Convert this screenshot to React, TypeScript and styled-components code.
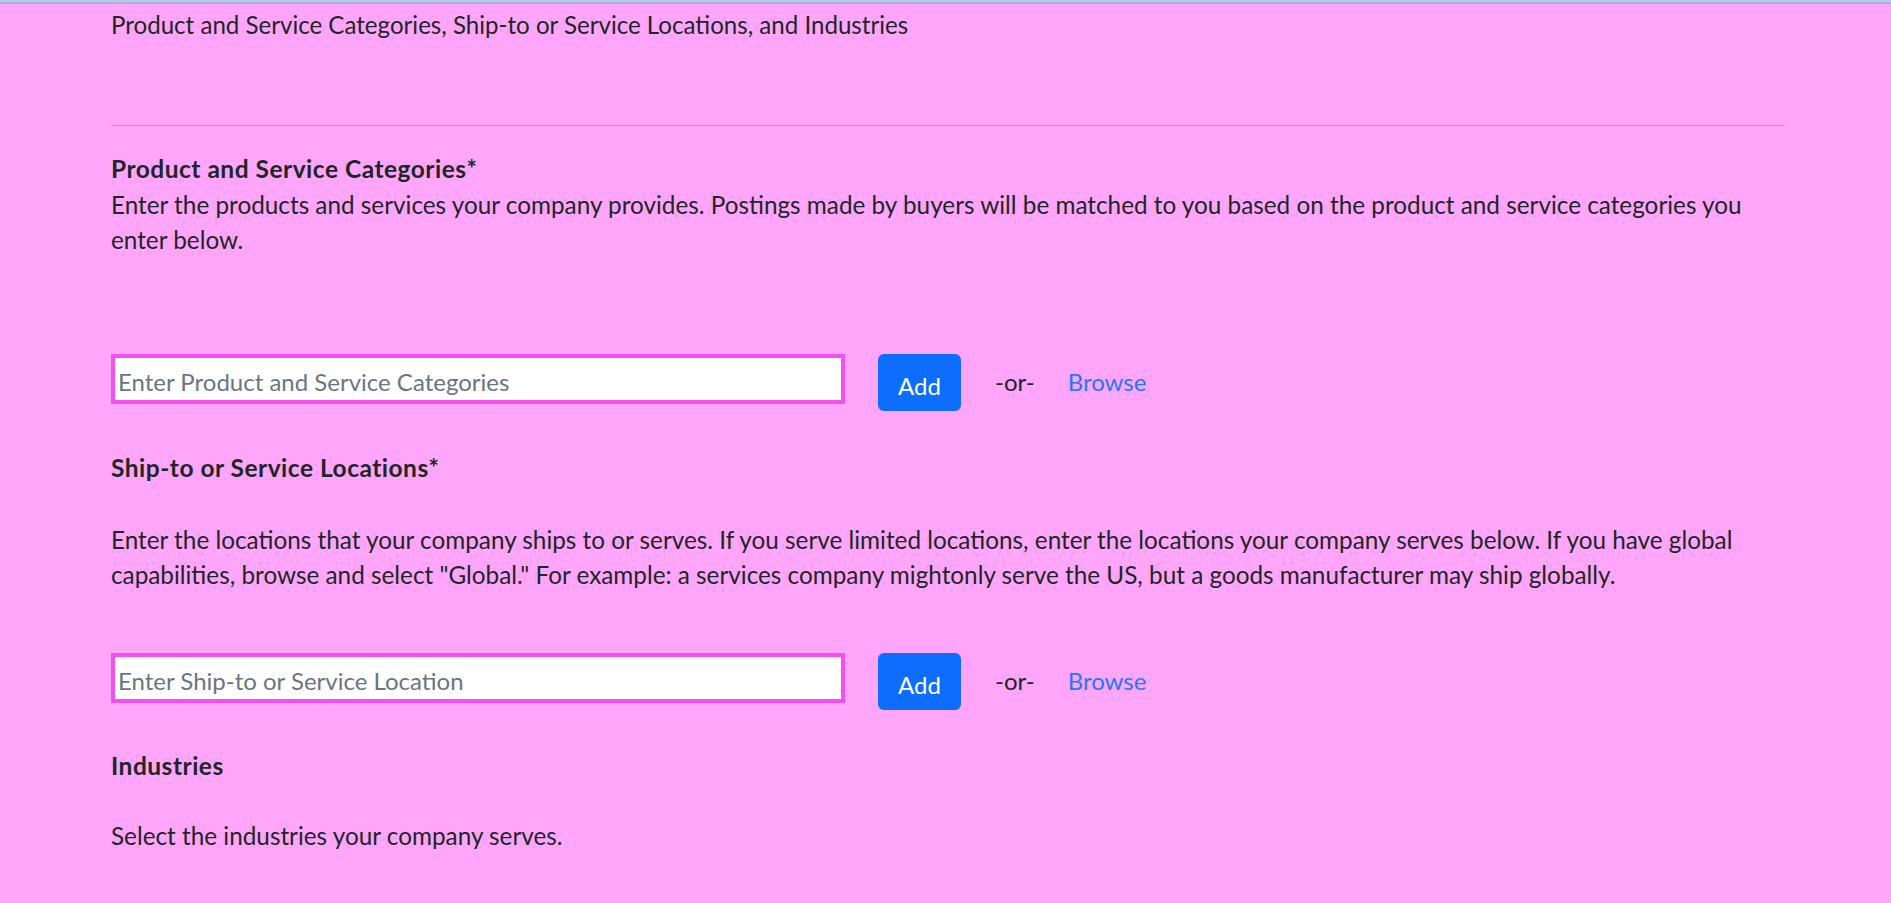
import React from "react";
import styled, { createGlobalStyle } from "styled-components";

const GlobalStyle = createGlobalStyle`
  html, body {
    margin: 0;
    padding: 0;
    background: #ffa6fb;
  }
  body {
    font-family: Lato, "Noto Sans", sans-serif;
    color: #212529;
  }
`;

const Page = styled.div`
  min-height: 903px;
  background: #ffa6fb;
`;

const TopBar = styled.div`
  height: 2px;
  background: #b9caec;
  border-bottom: 2px solid #a4b4d4;
`;

const Container = styled.main`
  width: 1674px;
  padding: 3px 0 0 111px;
  display: flex;
  flex-direction: column;
`;

const Subtitle = styled.p`
  margin: 0;
  font-size: 24.1px;
  line-height: 36px;
`;

const Divider = styled.hr`
  margin: 82px 0 25px;
  border: 0;
  border-top: 1px solid #c78bd0;
  width: 100%;
`;

const Heading = styled.h3<{ $gap?: number }>`
  margin: 0 0 ${(p) => p.$gap ?? 0}px;
  font-size: 24.5px;
  font-weight: 700;
  letter-spacing: 0.5px;
  line-height: 36px;
`;

const Para = styled.p<{ $gap: number }>`
  margin: 0 0 ${(p) => p.$gap}px;
  font-size: 24.3px;
  line-height: 35px;
`;

const Row = styled.div<{ $gap: number }>`
  display: flex;
  align-items: flex-start;
  margin-bottom: ${(p) => p.$gap}px;
`;

const Input = styled.input`
  box-sizing: border-box;
  width: 734px;
  height: 50px;
  border: 4px solid #f64ff0;
  background: #fff;
  padding: 4px 3px 0;
  font-family: inherit;
  font-size: 24px;
  color: #212529;
  outline: none;
  &::placeholder {
    color: #6c757d;
  }
`;

const AddButton = styled.button`
  margin-left: 33px;
  width: 83px;
  height: 57px;
  border: 0;
  border-radius: 6px;
  background: #0d6efd;
  color: #fff;
  font-family: inherit;
  font-size: 24px;
  padding: 6px 0 0;
  cursor: pointer;
`;

const Or = styled.span`
  margin-left: 34px;
  line-height: 56px;
  font-size: 24px;
`;

const BrowseLink = styled.a`
  margin-left: 33px;
  line-height: 56px;
  font-size: 24px;
  color: #1f78fd;
  text-decoration: none;
`;

function AddRow({ placeholder, gap }: { placeholder: string; gap: number }) {
  return (
    <Row $gap={gap}>
      <Input placeholder={placeholder} />
      <AddButton>Add</AddButton>
      <Or>-or-</Or>
      <BrowseLink href="#">Browse</BrowseLink>
    </Row>
  );
}

export default function App() {
  return (
    <Page>
      <GlobalStyle />
      <TopBar />
      <Container>
        <Subtitle>
          Product and Service Categories, Ship-to or Service Locations, and Industries
        </Subtitle>
        <Divider />
        <Heading>Product and Service Categories*</Heading>
        <Para $gap={97}>
          Enter the products and services your company provides. Postings made by buyers will be
          matched to you based on the product and service categories you enter below.
        </Para>
        <AddRow placeholder="Enter Product and Service Categories" gap={39} />
        <Heading $gap={36}>Ship-to or Service Locations*</Heading>
        <Para $gap={61}>
          Enter the locations that your company ships to or serves. If you serve limited
          locations, enter the locations your company serves below. If you have global
          capabilities, browse and select "Global." For example: a services company mightonly
          serve the US, but a goods manufacturer may ship globally.
        </Para>
        <AddRow placeholder="Enter Ship-to or Service Location" gap={38} />
        <Heading $gap={34}>Industries</Heading>
        <Para $gap={0}>Select the industries your company serves.</Para>
      </Container>
    </Page>
  );
}
